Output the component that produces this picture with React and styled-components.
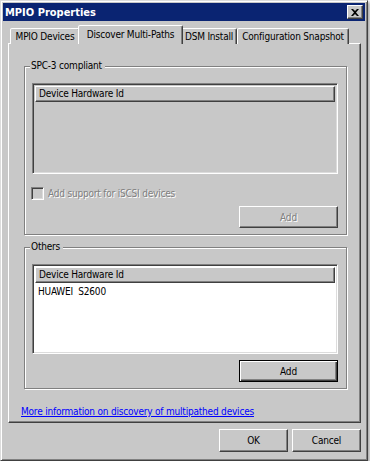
import styled, { createGlobalStyle } from "styled-components";

const GlobalStyle = createGlobalStyle`
  html, body {
    margin: 0;
    padding: 0;
    background: #ffffff;
  }
  body {
    font-family: "DejaVu Sans Condensed", "Liberation Sans", sans-serif;
    font-size: 10px;
    letter-spacing: -0.2px;
    color: #000;
  }
`;

const raised = `
  border: 1px solid;
  border-color: #ffffff #404040 #404040 #ffffff;
  box-shadow: inset -1px -1px 0 #808080;
`;

const sunken = `
  border: 1px solid;
  border-color: #808080 #ffffff #ffffff #808080;
  box-shadow: inset 1px 1px 0 #404040, inset -1px -1px 0 #dcdcdc;
`;

const Window = styled.div`
  box-sizing: border-box;
  width: 368px;
  height: 461px;
  padding: 2px;
  background: #c8c8c8;
  border: 1px solid;
  border-color: #dcdcdc #404040 #404040 #dcdcdc;
  box-shadow: inset 1px 1px 0 #ffffff, inset -1px -1px 0 #808080,
    2px 2px 3px rgba(0, 0, 0, 0.35);
  display: flex;
  flex-direction: column;
`;

const TitleBar = styled.div`
  height: 18px;
  flex: none;
  background: #0a2472;
  color: #ffffff;
  font-weight: bold;
  font-size: 11px;
  letter-spacing: 0;
  display: flex;
  align-items: center;
  justify-content: space-between;
  padding: 0 2px 0 2px;
`;

const CloseButton = styled.div`
  box-sizing: border-box;
  width: 16px;
  height: 14px;
  background: #c8c8c8;
  ${raised}
  display: flex;
  align-items: center;
  justify-content: center;
`;

const Body = styled.div`
  flex: 1;
  display: flex;
  flex-direction: column;
  padding: 5px 4px 5px 5px;
`;

const TabStrip = styled.div`
  height: 18px;
  display: flex;
  align-items: flex-end;
  padding-left: 2px;
  position: relative;
  z-index: 1;
  margin-bottom: -1px;
`;

const Tab = styled.div`
  box-sizing: border-box;
  width: ${(p) => p.$w}px;
  height: ${(p) => (p.$active ? 19 : 16)}px;
  margin: 0 ${(p) => (p.$active ? -2 : 0)}px;
  padding-top: ${(p) => (p.$active ? 2 : 1)}px;
  background: #c8c8c8;
  border: 1px solid;
  border-bottom: none;
  border-color: #ffffff #404040 transparent #ffffff;
  border-radius: 2px 2px 0 0;
  box-shadow: inset -1px 0 0 #808080;
  white-space: nowrap;
  text-align: center;
  line-height: 13px;
  position: relative;
  z-index: ${(p) => (p.$active ? 2 : 1)};
`;

const Panel = styled.div`
  box-sizing: border-box;
  height: 380px;
  ${raised}
  padding: 16px 13px 0 15px;
  display: flex;
  flex-direction: column;
`;

const Group = styled.fieldset`
  margin: 0 0 6px;
  padding: 11px 8px 6px 7px;
  border: 1px solid #808080;
  box-shadow: inset 1px 1px 0 #ffffff, 1px 1px 0 #ffffff;
  display: flex;
  flex-direction: column;
`;

const Legend = styled.legend`
  padding: 0 3px 0 1px;
  margin-left: -2px;
  line-height: 12px;
  background: #c8c8c8;
`;

const List = styled.div`
  box-sizing: border-box;
  height: ${(p) => p.$h}px;
  background: ${(p) => (p.$disabled ? "#c8c8c8" : "#ffffff")};
  ${sunken}
  padding: 2px;
`;

const ListHeader = styled.div`
  box-sizing: border-box;
  height: 16px;
  background: #c8c8c8;
  ${raised}
  padding-left: 3px;
  line-height: 14px;
`;

const ListItem = styled.div`
  padding: 2px 0 0 3px;
  line-height: 13px;
  white-space: pre;
`;

const CheckRow = styled.label`
  display: flex;
  align-items: center;
  gap: 4px;
  margin: 13px 0 6px;
  color: #808080;
  text-shadow: 1px 1px 0 #ffffff;
`;

const CheckBox = styled.span`
  box-sizing: border-box;
  width: 13px;
  height: 13px;
  margin-left: -1px;
  background: #c8c8c8;
  ${sunken}
`;

const ButtonRow = styled.div`
  display: flex;
  justify-content: flex-end;
  gap: 4px;
  margin-top: ${(p) => p.$mt || 0}px;
`;

const Button = styled.div`
  box-sizing: border-box;
  width: ${(p) => p.$w}px;
  height: ${(p) => p.$h || 22}px;
  background: #c8c8c8;
  ${(p) =>
    p.$default
      ? `border: 1px solid #000000;
         box-shadow: inset 1px 1px 0 #ffffff, inset -1px -1px 0 #404040, inset -2px -2px 0 #808080;`
      : raised}
  color: ${(p) => (p.$disabled ? "#808080" : "#000000")};
  text-shadow: ${(p) => (p.$disabled ? "1px 1px 0 #ffffff" : "none")};
  display: flex;
  align-items: center;
  justify-content: center;
`;

const Link = styled.a`
  color: #0000ff;
  text-decoration: underline;
  margin: 11px 0 0 -3px;
  line-height: 12px;
`;

export default function App() {
  return (
    <>
      <GlobalStyle />
      <Window>
        <TitleBar>
          <span>MPIO Properties</span>
          <CloseButton>
            <svg width="8" height="7" viewBox="0 0 8 7">
              <path d="M0 0h2l2 2 2-2h2L5 3.5 8 7H6L4 5 2 7H0l3-3.5z" fill="#000" />
            </svg>
          </CloseButton>
        </TitleBar>
        <Body>
          <TabStrip>
            <Tab $w={70}>MPIO Devices</Tab>
            <Tab $w={105} $active>Discover Multi-Paths</Tab>
            <Tab $w={56}>DSM Install</Tab>
            <Tab $w={112}>Configuration Snapshot</Tab>
          </TabStrip>
          <Panel>
            <Group>
              <Legend>SPC-3 compliant</Legend>
              <List $h={91} $disabled>
                <ListHeader>Device Hardware Id</ListHeader>
              </List>
              <CheckRow>
                <CheckBox />
                Add support for iSCSI devices
              </CheckRow>
              <ButtonRow>
                <Button $w={99} $disabled>Add</Button>
              </ButtonRow>
            </Group>
            <Group>
              <Legend>Others</Legend>
              <List $h={90}>
                <ListHeader>Device Hardware Id</ListHeader>
                <ListItem>HUAWEI  S2600</ListItem>
              </List>
              <ButtonRow $mt={6}>
                <Button $w={99} $default>Add</Button>
              </ButtonRow>
            </Group>
            <Link href="#">More information on discovery of multipathed devices</Link>
          </Panel>
          <ButtonRow $mt={6}>
            <Button $w={69} $h={23}>OK</Button>
            <Button $w={69} $h={23}>Cancel</Button>
          </ButtonRow>
        </Body>
      </Window>
    </>
  );
}
